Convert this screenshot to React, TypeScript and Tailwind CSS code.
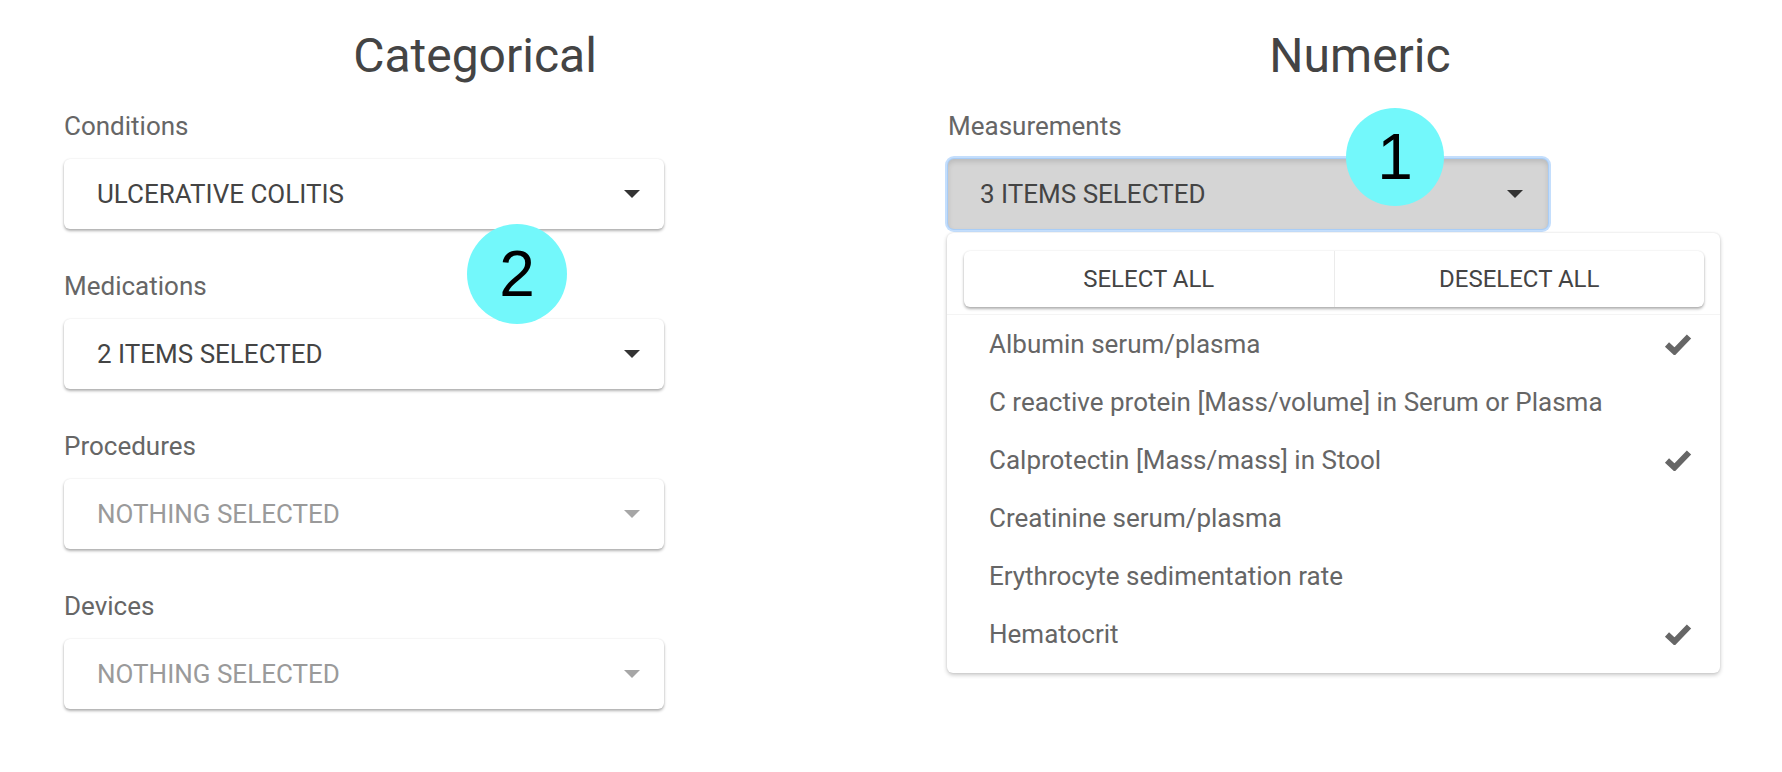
type Field = {
  label: string;
  value: string;
  disabled?: boolean;
};

const categorical: Field[] = [
  { label: "Conditions", value: "ULCERATIVE COLITIS" },
  { label: "Medications", value: "2 ITEMS SELECTED" },
  { label: "Procedures", value: "NOTHING SELECTED", disabled: true },
  { label: "Devices", value: "NOTHING SELECTED", disabled: true },
];

const measurements = [
  { name: "Albumin serum/plasma", checked: true },
  { name: "C reactive protein [Mass/volume] in Serum or Plasma", checked: false },
  { name: "Calprotectin [Mass/mass] in Stool", checked: true },
  { name: "Creatinine serum/plasma", checked: false },
  { name: "Erythrocyte sedimentation rate", checked: false },
  { name: "Hematocrit", checked: true },
];

function Caret({ muted }: { muted?: boolean }) {
  return (
    <svg width="16" height="8" viewBox="0 0 16 8" className="shrink-0">
      <path d="M0 0h16L8 8z" fill={muted ? "#a6a6a6" : "#333333"} />
    </svg>
  );
}

function Check() {
  return (
    <svg width="28" height="22" viewBox="0 0 28 22">
      <polyline
        points="3,11.5 10.5,18.5 25,3.5"
        fill="none"
        stroke="#666666"
        strokeWidth="6"
        strokeLinejoin="miter"
      />
    </svg>
  );
}

function SelectBox({ field }: { field: Field }) {
  return (
    <div className="flex h-[70px] w-[600px] items-center justify-between rounded-[6px] bg-white pl-[33px] pr-[24px] shadow-[0_2px_3px_rgba(0,0,0,0.3),0_0_2px_rgba(0,0,0,0.1)]">
      <span
        className={`text-[26px] leading-[30px] ${field.disabled ? "text-[#9a9a9a]" : "text-[#444444]"}`}
      >
        {field.value}
      </span>
      <Caret muted={field.disabled} />
    </div>
  );
}

function Badge({ n, className }: { n: string; className: string }) {
  return (
    <div
      className={`absolute flex items-center justify-center rounded-full bg-[#73f8fb] font-['Liberation_Sans',Arial,sans-serif] text-[64px] leading-none text-black ${className}`}
    >
      {n}
    </div>
  );
}

export default function App() {
  return (
    <div className="relative min-h-[772px] w-full bg-white font-['Roboto',sans-serif]">
      <div className="grid grid-cols-[822px_824px] gap-x-[62px] pl-[64px] pt-[28px]">
        {/* left */}
        <div>
          <h1 className="text-center text-[48px] leading-[56px] font-normal text-[#444444]">Categorical</h1>
          <div className="mt-[26px] flex flex-col gap-[41px]">
            {categorical.map((field) => (
              <div key={field.label}>
                <div className="text-[26px] leading-[32px] text-[#666666]">{field.label}</div>
                <div className="mt-[17px]">
                  <SelectBox field={field} />
                </div>
              </div>
            ))}
          </div>
        </div>

        {/* right */}
        <div>
          <h1 className="text-center text-[48px] leading-[56px] font-normal text-[#444444]">Numeric</h1>
          <div className="mt-[26px]">
            <div className="text-[26px] leading-[32px] text-[#666666]">Measurements</div>
            <div className="relative mt-[17px] w-[600px]">
              <div className="flex h-[70px] items-center justify-between rounded-[6px] bg-[#d5d5d5] pl-[32px] pr-[25px] shadow-[inset_0_3px_5px_rgba(0,0,0,0.12),0_0_0_1px_#a9cdf6,0_0_0_3px_#c4defc]">
                <span className="text-[26px] leading-[30px] text-[#444444]">3 ITEMS SELECTED</span>
                <Caret />
              </div>

              <div className="absolute left-[-1px] top-[74px] z-10 w-[773px] rounded-[6px] bg-white pb-[10px] pt-[18px] shadow-[0_2px_4px_rgba(0,0,0,0.22),0_0_2px_rgba(0,0,0,0.1)]">
                <div className="ml-[17px] mr-[16px] flex h-[56px] rounded-[6px] bg-white shadow-[0_2px_3px_rgba(0,0,0,0.3),0_0_2px_rgba(0,0,0,0.1)]">
                  <button className="flex-1 border-r border-[#ebebeb] text-[24px] text-[#444444]">SELECT ALL</button>
                  <button className="flex-1 text-[24px] text-[#444444]">DESELECT ALL</button>
                </div>
                <div className="mt-[7px] border-t border-[#f4f4f4]">
                  {measurements.map((m) => (
                    <div key={m.name} className="flex h-[58px] items-center justify-between pl-[42px] pr-[28px]">
                      <span className="text-[26px] leading-[30px] text-[#666666]">{m.name}</span>
                      {m.checked && <Check />}
                    </div>
                  ))}
                </div>
              </div>
            </div>
          </div>
        </div>
      </div>

      <Badge n="1" className="left-[1346px] top-[108px] h-[98px] w-[98px]" />
      <Badge n="2" className="left-[467px] top-[224px] h-[100px] w-[100px]" />
    </div>
  );
}
